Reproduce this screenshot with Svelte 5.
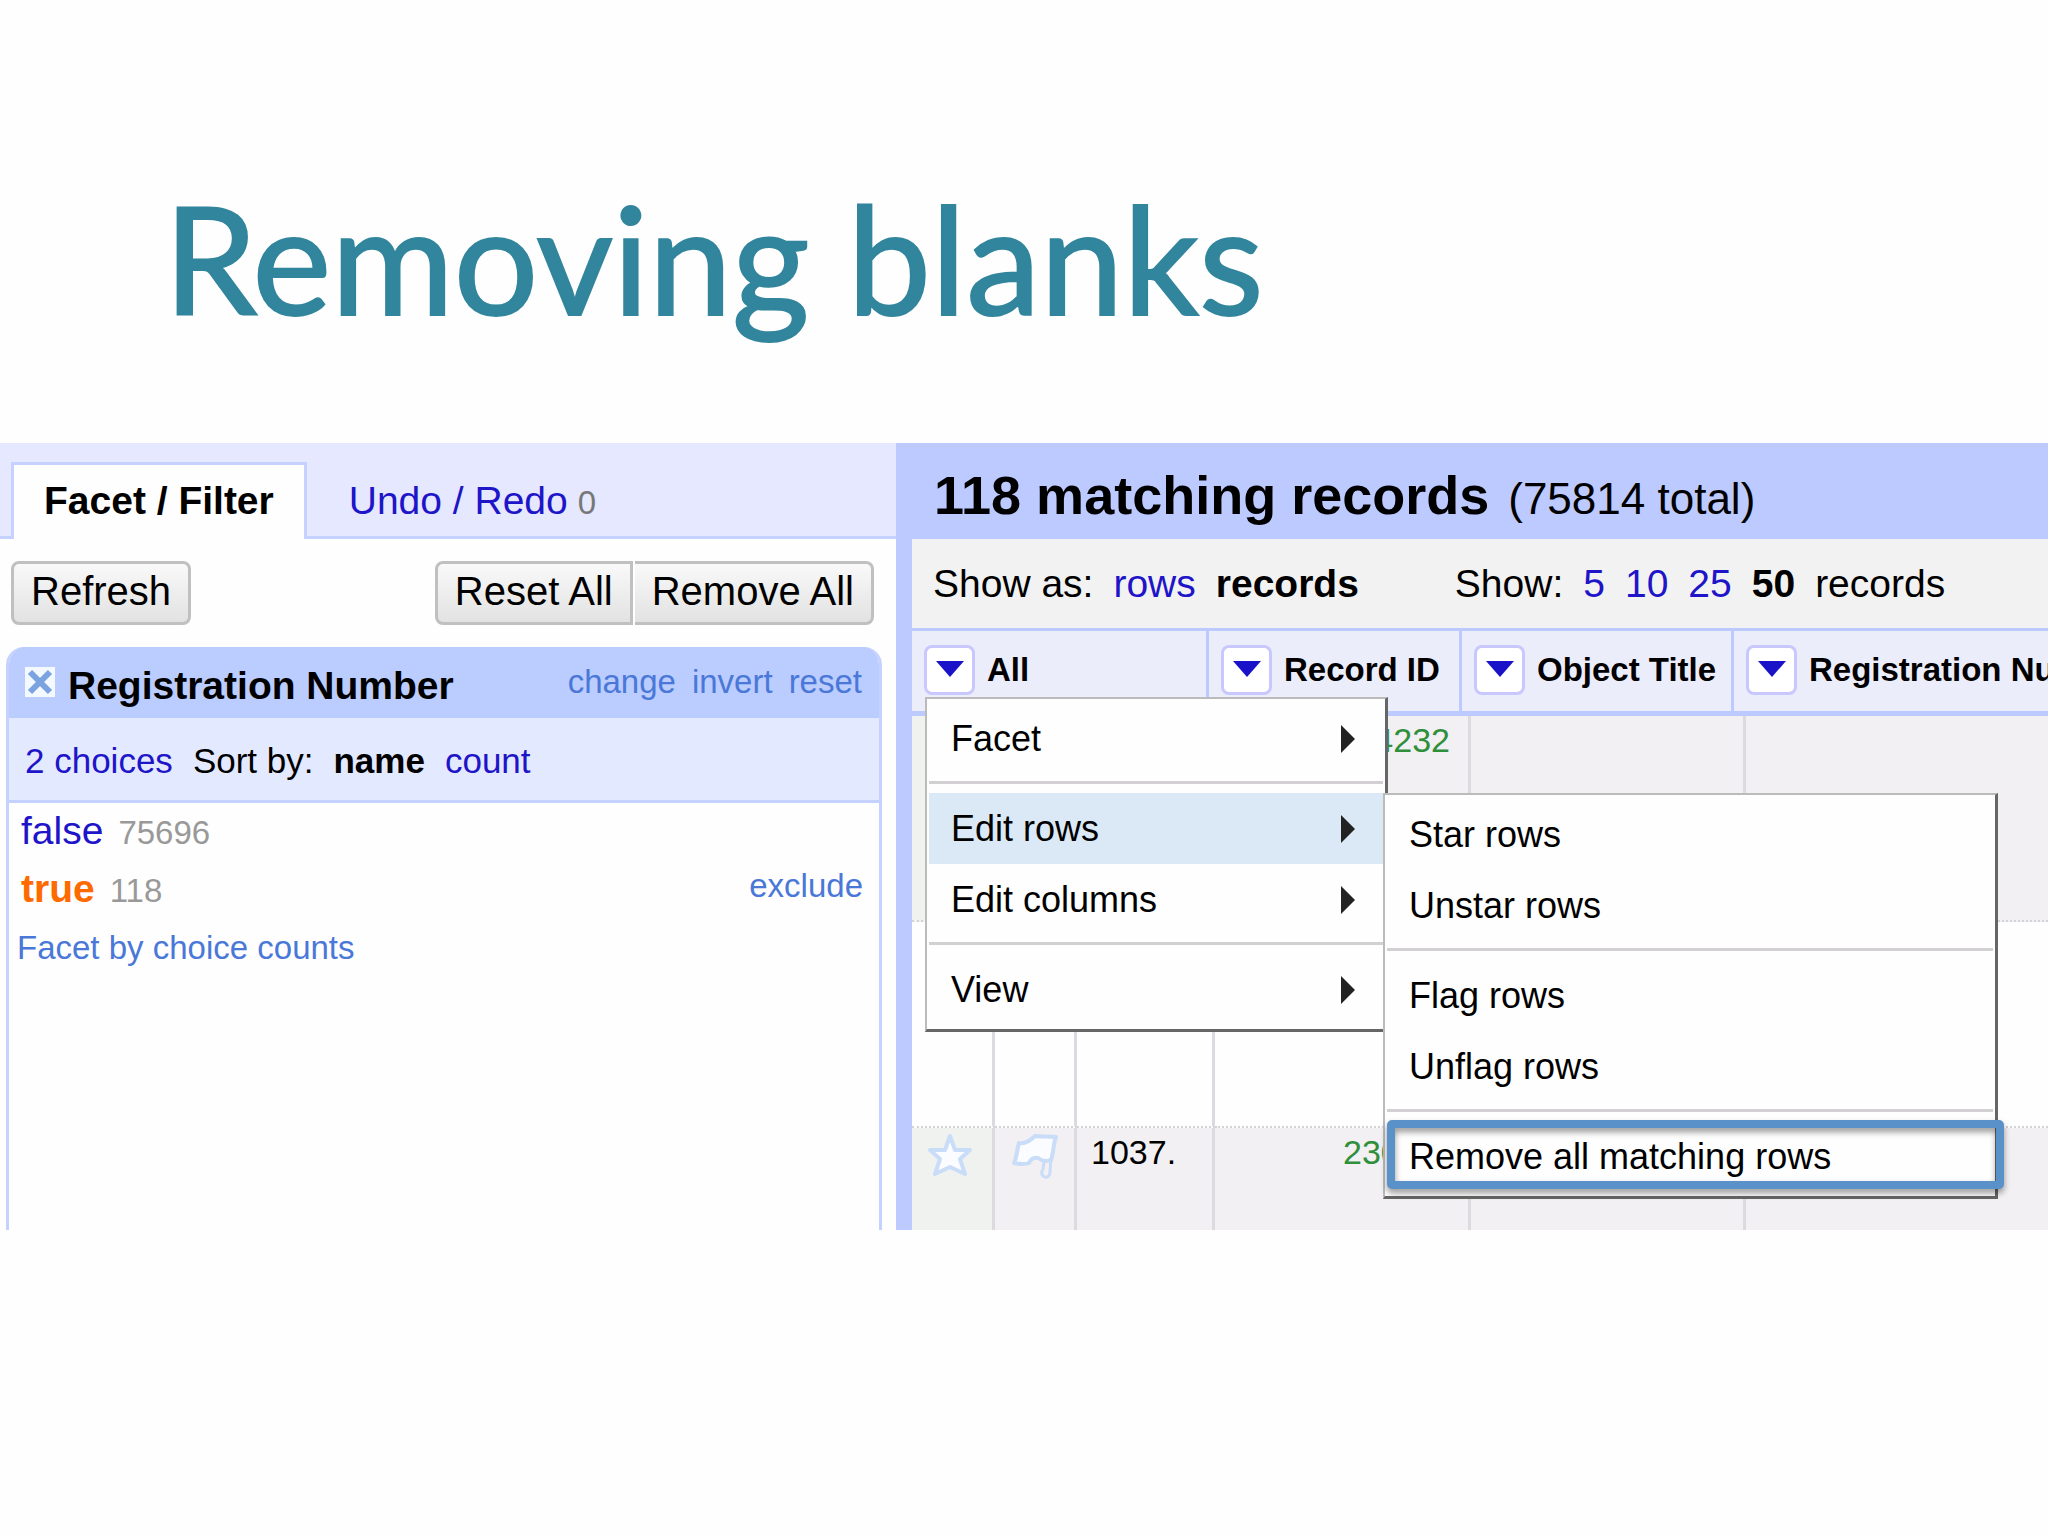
<script lang="ts">
  type MenuEntry = { label: string; submenu?: boolean; boxed?: boolean };

  let selectedSize = 50;
  let openItem = 'Edit rows';

  const pageSizes = [5, 10, 25, 50];
  const columns = ['All', 'Record ID', 'Object Title', 'Registration Number'];

  // each inner list is one group, groups are split by a separator
  const allMenu: MenuEntry[][] = [
    [{ label: 'Facet' }],
    [{ label: 'Edit rows', submenu: true }, { label: 'Edit columns' }],
    [{ label: 'View' }],
  ];

  const rowsMenu: MenuEntry[][] = [
    [{ label: 'Star rows' }, { label: 'Unstar rows' }],
    [{ label: 'Flag rows' }, { label: 'Unflag rows' }],
    [{ label: 'Remove all matching rows', boxed: true }],
  ];
</script>

<main class="slide">
  <h1>Removing blanks</h1>

  <div class="app">
    <section class="left">
      <nav class="tabs">
        <a class="tab active" href="#facets">Facet / Filter</a>
        <a class="tab" href="#history">Undo / Redo <span class="steps">0</span></a>
      </nav>

      <div class="toolbar">
        <button class="btn">Refresh</button>
        <div class="btn-group">
          <button class="btn first">Reset All</button>
          <button class="btn last">Remove All</button>
        </div>
      </div>

      <div class="facet">
        <header class="facet-title">
          <button class="close" aria-label="Remove facet">
            <svg viewBox="0 0 30 30" width="30" height="30">
              <path d="M5 5 L25 25 M25 5 L5 25" stroke="#7ba3e0" stroke-width="6" />
            </svg>
          </button>
          <h2>Registration Number</h2>
          <div class="facet-actions">
            <a href="#change">change</a>
            <a href="#invert">invert</a>
            <a href="#reset">reset</a>
          </div>
        </header>
        <div class="facet-controls">
          <a href="#choices">2 choices</a>
          <span class="sort">Sort by:</span>
          <b>name</b>
          <a href="#count">count</a>
        </div>
        <div class="facet-body">
          <div class="choice">
            <a href="#false">false</a>
            <span class="count">75696</span>
          </div>
          <div class="choice selected">
            <a href="#true">true</a>
            <span class="count">118</span>
            <a class="exclude" href="#exclude">exclude</a>
          </div>
          <a class="by-count" href="#counts">Facet by choice counts</a>
        </div>
      </div>
    </section>

    <section class="right">
      <header class="summary">
        <h2>118 matching records</h2>
        <span>(75814 total)</span>
      </header>

      <div class="view-bar">
        <span class="label">Show as:</span>
        <a href="#rows">rows</a>
        <b>records</b>
        <span class="label sizes">Show:</span>
        {#each pageSizes as size}
          {#if size === selectedSize}
            <b>{size}</b>
          {:else}
            <a href="#{size}">{size}</a>
          {/if}
        {/each}
        <span class="unit">records</span>
      </div>

      <div class="head-wrap">
        <table class="head">
          <colgroup>
            <col class="h-all" /><col class="h-id" /><col class="h-title" /><col />
          </colgroup>
          <thead>
            <tr>
              {#each columns as column}
                <th>
                  <div class="col-head">
                    <button class="drop" aria-label="{column} menu">
                      <svg viewBox="0 0 28 16" width="28" height="16"><path d="M0 0 H28 L14 16 Z" fill="#1a12c8" /></svg>
                    </button>
                    {column}
                  </div>
                </th>
              {/each}
            </tr>
          </thead>
        </table>

        <ul class="menu main-menu">
          {#each allMenu as group}
            <li class="group">
              <ul>
                {#each group as item}
                  <li class="item" class:open={item.label === openItem}>
                    <button>
                      {item.label}
                      <svg viewBox="0 0 14 28" width="14" height="28"><path d="M0 0 L14 14 L0 28 Z" fill="#222" /></svg>
                    </button>
                    {#if item.submenu}
                      <ul class="menu sub-menu">
                        {#each rowsMenu as subGroup}
                          <li class="group">
                            <ul>
                              {#each subGroup as sub}
                                <li class="item" class:boxed={sub.boxed}><button>{sub.label}</button></li>
                              {/each}
                            </ul>
                          </li>
                        {/each}
                      </ul>
                    {/if}
                  </li>
                {/each}
              </ul>
            </li>
          {/each}
        </ul>
      </div>

      <table class="body">
        <colgroup>
          <col class="b-star" /><col class="b-flag" /><col class="b-num" /><col class="b-id" /><col class="b-title" /><col />
        </colgroup>
        <tbody>
          <tr class="odd">
            <td class="star"></td><td></td><td></td><td class="id">4232</td><td></td><td></td>
          </tr>
          <tr>
            <td></td><td></td><td></td><td></td><td></td><td></td>
          </tr>
          <tr class="odd last-row">
            <td class="star">
              <svg viewBox="0 0 44 44" width="44" height="44">
                <path d="M22 3 L27 17 L42 17 L32 26 L37 41 L22 34 L7 41 L12 26 L2 17 L17 17 Z" fill="#fbfcff" stroke="#c9dcf8" stroke-width="4" stroke-linejoin="round" />
              </svg>
            </td>
            <td>
              <svg viewBox="0 0 48 48" width="48" height="48">
                <path d="M40 24 L39 39 C39 43 36 45 34 44 C30 43 30 39 32 36 L33 29" fill="none" stroke="#c9dcf8" stroke-width="3" />
                <path d="M8 10 C13 11 19 8 24 3 C31 4 38 3 45 4 C42 11 43 19 40 27 C35 29 31 28 27 25 C23 24 20 26 18 30 C13 32 8 31 3 30 C6 24 6 16 8 10 Z" fill="#fbfcff" stroke="#c9dcf8" stroke-width="4" stroke-linejoin="round" />
              </svg>
            </td>
            <td class="num">1037.</td>
            <td class="id cut">230</td>
            <td></td>
            <td></td>
          </tr>
        </tbody>
      </table>
    </section>
  </div>
</main>

<style>
  :global(body) {
    margin: 0;
    background: #fefefe;
    font-family: 'Liberation Sans', Arial, sans-serif;
  }

  * {
    box-sizing: border-box;
  }

  h1, h2, ul {
    margin: 0;
    padding: 0;
    list-style: none;
  }

  a {
    color: #1e14c8;
    text-decoration: none;
  }

  button {
    font: inherit;
    color: #000;
    cursor: pointer;
  }

  svg {
    display: block;
    flex: none;
  }

  .slide {
    overflow: hidden;
  }

  h1 {
    padding: 158px 164px 85px;
    font-family: 'Gill Sans', 'Gill Sans MT', Lato, sans-serif;
    font-size: 149px;
    font-weight: 400;
    line-height: 200px;
    color: #31859c;
    white-space: nowrap;
    -webkit-text-stroke: 2px #31859c;
  }

  .app {
    display: grid;
    grid-template-columns: 43.75% minmax(0, 1fr);
    font-size: 39px;
    white-space: nowrap;
  }

  /* left panel */
  .left {
    display: flex;
    flex-direction: column;
  }

  .tabs {
    display: flex;
    height: 96px;
    padding: 19px 11px 0;
    background: #e5e8ff;
    box-shadow: inset 0 -3px #c5d2ff;
  }

  .tab {
    display: flex;
    align-items: center;
    gap: 10px;
    padding: 0 42px;
  }

  .tab.active {
    padding: 0 30px 2px;
    border: 3px solid #c5d2ff;
    border-bottom: 0;
    background: #fefefe;
    color: #000;
    font-weight: bold;
  }

  .steps {
    padding-top: 4px;
    font-size: 33px;
    line-height: 40px;
    color: #777;
  }

  .toolbar {
    display: flex;
    justify-content: space-between;
    padding: 22px 22px 22px 11px;
  }

  .btn-group {
    display: flex;
    gap: 2px;
  }

  .btn {
    height: 64px;
    padding: 0 17px 3px;
    border: 3px solid #c0c0c0;
    border-radius: 8px;
    background: linear-gradient(#f9f9f9, #e2e2e2);
    font-size: 40px;
  }

  .btn.first {
    border-radius: 8px 0 0 8px;
  }

  .btn.last {
    border-left-width: 0;
    border-radius: 0 8px 8px 0;
  }

  .facet {
    flex: 1;
    margin: 0 14px 0 6px;
    border: solid #c5d2ff;
    border-width: 0 3px;
    border-radius: 18px 18px 0 0;
    overflow: hidden;
  }

  .facet-title {
    display: flex;
    align-items: center;
    height: 71px;
    margin: 0 -3px;
    padding: 6px 20px 0 19px;
    background: #bbccff;
  }

  .close {
    margin: 0 13px 8px 0;
    padding: 0;
    border: 0;
    background: #f4f8ff;
  }

  .facet-title h2 {
    font-size: 39px;
  }

  .facet-actions {
    display: flex;
    gap: 16px;
    margin-left: auto;
    padding-bottom: 8px;
    font-size: 33px;
  }

  .facet-actions a,
  .exclude,
  .by-count {
    color: #4a78d8;
  }

  .facet-controls {
    display: flex;
    align-items: center;
    gap: 20px;
    height: 85px;
    padding: 4px 16px 0;
    border-bottom: 3px solid #c5d2ff;
    background: #e3e9ff;
    font-size: 35px;
  }

  .facet-body {
    padding: 0 16px 0 12px;
  }

  .choice {
    display: flex;
    align-items: baseline;
    gap: 15px;
    height: 58px;
    line-height: 56px;
  }

  .count,
  .exclude {
    font-size: 33px;
    color: #999;
  }

  .selected a {
    color: #ff6a00;
    font-weight: bold;
  }

  .selected .exclude {
    align-self: flex-start;
    margin-left: auto;
    line-height: 50px;
    color: #4a78d8;
    font-weight: normal;
  }

  .by-count {
    display: block;
    margin-left: -4px;
    font-size: 33px;
    line-height: 58px;
  }

  /* right panel */
  .right {
    border-left: 16px solid #bccaff;
    overflow: hidden;
  }

  .summary {
    display: flex;
    align-items: baseline;
    gap: 19px;
    height: 96px;
    padding: 0 22px;
    background: #bccaff;
    font-size: 44px;
    line-height: 104px;
  }

  .summary h2 {
    font-size: 54px;
  }

  .view-bar {
    display: flex;
    align-items: center;
    gap: 20px;
    height: 89px;
    padding: 0 21px;
    background: #f2f2f2;
  }

  .view-bar .sizes {
    margin-left: 76px;
  }

  .head-wrap {
    position: relative;
  }

  table {
    width: 100%;
    table-layout: fixed;
    border-collapse: separate;
    border-spacing: 0;
    font-size: 33px;
  }

  .h-all { width: 297px; }
  .h-id { width: 253px; }
  .h-title { width: 272px; }

  th {
    height: 88px;
    padding: 0 0 3px 12px;
    border: solid #bccaff;
    border-width: 3px 3px 5px 0;
    background: #ecedfa;
    text-align: left;
    overflow: hidden;
  }

  th:last-child,
  td:last-child {
    border-right: 0;
  }

  .col-head {
    display: flex;
    align-items: center;
    gap: 12px;
  }

  .drop {
    display: flex;
    align-items: center;
    justify-content: center;
    flex: none;
    width: 51px;
    height: 50px;
    padding: 0 0 2px;
    border: 3px solid #c8c8ff;
    border-radius: 8px;
    background: #fff;
  }

  .body {
    font-size: 34px;
  }

  .b-star { width: 83px; }
  .b-flag { width: 82px; }
  .b-num { width: 138px; }
  .b-id { width: 256px; }
  .b-title { width: 275px; }

  td {
    height: 206px;
    padding: 2px 14px;
    border-right: 3px solid #dcdade;
    border-bottom: 2px dotted #d4d2d6;
    vertical-align: top;
    line-height: 44px;
  }

  .odd td {
    background: #f2f0f3;
  }

  .odd .star {
    background: #f0f2f0;
  }

  .last-row td {
    height: 102px;
    border-bottom: 0;
  }

  .last-row svg {
    margin: 3px 0 0 2px;
  }

  .id {
    padding-right: 18px;
    color: #2f8f3a;
    text-align: right;
  }

  .last-row .cut {
    padding-left: 128px;
    text-align: left;
  }

  /* menus */
  .menu {
    position: absolute;
    padding: 4px 2px;
    border: 2px solid #bbb;
    border-right: 3px solid #666;
    border-bottom: 3px solid #666;
    background: #fefefe;
    font-size: 36px;
  }

  .main-menu {
    top: 69px;
    left: 13px;
    z-index: 1;
    width: 463px;
  }

  .sub-menu {
    top: 0;
    left: 100%;
    width: 615px;
  }

  .group + .group {
    margin-top: 7px;
    padding-top: 9px;
    border-top: 3px solid #d2d0d2;
  }

  .item {
    position: relative;
  }

  .item button {
    display: flex;
    align-items: center;
    justify-content: space-between;
    width: 100%;
    height: 71px;
    padding: 0 28px 0 22px;
    border: 0;
    background: none;
  }

  .item.open > button {
    background: #dbe8f6;
  }

  .boxed::after {
    content: '';
    position: absolute;
    inset: -1px -11px 3px 0;
    border: 8px solid #5a91c8;
    border-radius: 5px;
    filter: drop-shadow(0 4px 3px rgb(0 0 0 / 40%));
    pointer-events: none;
  }
</style>
